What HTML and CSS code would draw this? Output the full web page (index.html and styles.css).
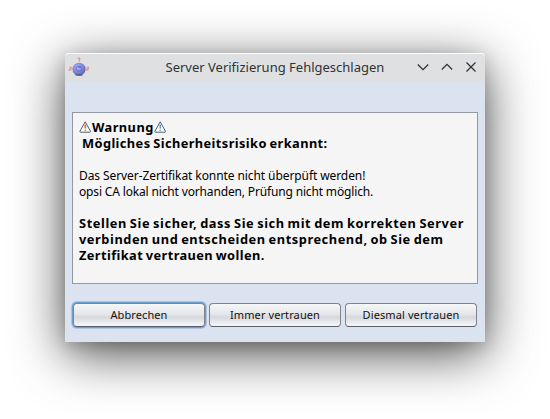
FILE: index.html
```html
<!DOCTYPE html>
<html lang="de">
<head>
<meta charset="utf-8">
<title>Server Verifizierung Fehlgeschlagen</title>
<link rel="stylesheet" href="styles.css">
</head>
<body>
<main class="window">
  <header class="titlebar">
    <svg class="app-icon" width="22" height="22" viewBox="0 0 22 22">
      <defs>
        <radialGradient id="ball" cx="40%" cy="35%" r="65%">
          <stop offset="0" stop-color="#b4bbf3"/>
          <stop offset=".6" stop-color="#7c87dc"/>
          <stop offset="1" stop-color="#5c64ad"/>
        </radialGradient>
      </defs>
      <g fill="none" stroke="#e88c98" stroke-width="1.2">
        <path d="M9.700 1.700q1.800-1.400 2.300.3L11 4.500M1.300 10.500q2-1.200 2 .5L1.300 13h2.200M18.500 10.500q2-1.200 2 .5L18.500 13h2.200"/>
      </g>
      <circle cx="11" cy="12.200" r="6.500" fill="url(#ball)"/>
      <ellipse cx="11" cy="18" rx="4" ry="1" fill="#444c70" opacity=".55"/>
      <path d="M13 9.400H9.800q-1.600 0-1.600 1.600v1.400q0 1.600 1.600 1.600h2.200q1.500 0 1.500-1.600v-.9q0-1.100-1-1.100h-2" fill="none" stroke="#5961b8" stroke-width=".8"/>
    </svg>
    <h1 class="title"><span>Server Verifizierung Fehlgeschlagen</span></h1>
    <div class="controls">
      <svg width="12" height="12" viewBox="0 0 12 12"><path d="M.8 3.500 6 8.700l5.200-5.200"/></svg>
      <svg width="12" height="12" viewBox="0 0 12 12"><path d="M.8 8.500 6 3.300l5.200 5.200"/></svg>
      <svg width="12" height="12" viewBox="0 0 12 12"><path d="m1.500 1.500 9 9m0-9-9 9"/></svg>
    </div>
  </header>
  <section class="message">
    <p class="line strong">
      <svg class="warn" width="13" height="12" viewBox="0 0 13 12"><path d="M6.200.8 11.500 10.300q.2.900-.6.900H1.500q-.8 0-.6-.9Z" fill="#fff" stroke="#555b68"/><path d="M5.800 3.500v4M5.800 8.600v1.200" stroke="#e09a55"/><path d="M6.700 3.500v4M6.700 8.600v1.200" stroke="#4f7fae"/></svg><span class="warning">Warnung</span><svg class="warn" width="13" height="12" viewBox="0 0 13 12"><path d="M6.200.8 11.500 10.300q.2.900-.6.900H1.500q-.8 0-.6-.9Z" fill="#fff" stroke="#555b68"/><path d="M6.200 3.500v4M6.200 8.600v1.200" stroke="#4187bd" stroke-width="1.300"/></svg>
    </p>
    <p class="line strong risk"><span>Mögliches Sicherheitsrisiko erkannt:</span></p>
    <p class="line gap cert"><span>Das Server-Zertifikat konnte nicht überpüft werden!</span></p>
    <p class="line ca"><span>opsi CA lokal nicht vorhanden, Prüfung nicht möglich.</span></p>
    <p class="line strong gap ensure"><span>Stellen Sie sicher, dass Sie sich mit dem korrekten Server</span></p>
    <p class="line strong decide"><span>verbinden und entscheiden entsprechend, ob Sie dem</span></p>
    <p class="line strong trust"><span>Zertifikat vertrauen wollen.</span></p>
  </section>
  <footer class="actions">
    <button class="button focused">Abbrechen</button>
    <button class="button">Immer vertrauen</button>
    <button class="button">Diesmal vertrauen</button>
  </footer>
</main>
</body>
</html>
```
FILE: styles.css
```css
* { box-sizing: border-box; }
body {
  margin: 0;
  padding: 53px 65px 77px;
  height: 419px;
  overflow: hidden;
  background: #fff;
  font-family: "Noto Sans", sans-serif;
  color: #000;
}
.window {
  width: 420px;
  height: 289px;
  background: #dce3f0;
  border-radius: 4px 4px 0 0;
  box-shadow: 0 12px 52px rgba(0, 0, 0, .7), 0 4px 16px rgba(0, 0, 0, .16);
}
.titlebar {
  display: flex;
  align-items: center;
  height: 29px;
  padding: 0 8px 0 3px;
  background: #dee0e2;
  border-top: 1px solid #fff;
  border-radius: 4px 4px 0 0;
}
.app-icon { flex: none; }
.title {
  flex: 1;
  margin: 0 0 2px;
  padding-left: 75.5px;
  font-size: 13px;
  font-weight: 400;
  line-height: 20px;
  color: #303336;
  white-space: nowrap;
}
.controls { display: flex; gap: 12px; margin-bottom: 2px; }
.controls path { fill: none; stroke: #2b2e32; stroke-width: 1.2; }
.message {
  height: 172px;
  margin: 30px 7px 0;
  padding: 7px 6px 5px;
  background: #f5f5f5;
  border: 1px solid #9297a1;
}
.line {
  display: flex;
  align-items: center;
  height: 16px;
  margin: 0;
  font-size: 12px;
  line-height: 16px;
  white-space: pre;
}
.gap { margin-top: 16px; }
.strong { font-size: 12.8px; font-weight: 700; letter-spacing: .45px; word-spacing: -1px; }
.strong span { margin-bottom: 2px; }
.warn { flex: none; margin-bottom: 2px; }
.risk { padding-left: 3px; letter-spacing: .41px; }
.cert { letter-spacing: -.085px; }
.ca { letter-spacing: -.155px; }
.ensure { letter-spacing: .585px; }
.decide { letter-spacing: .56px; }
.trust { letter-spacing: .4px; }
.actions {
  display: flex;
  gap: 4px;
  padding: 19px 8px 0;
}
.button {
  width: 132px;
  height: 24px;
  padding: 0;
  border: 1px solid #80838c;
  border-bottom-color: #5c5f68;
  border-radius: 4px;
  background: linear-gradient(#f5f6f8, #e5e7ea 45%, #d5d8dd 60%, #f7f8fc);
  font: 11px/20px "Noto Sans", sans-serif;
  letter-spacing: .1px;
  color: #111;
}
.focused { box-shadow: 0 0 0 1px #6b9fd0, 0 0 0 2px #a9c6e5; }
```
